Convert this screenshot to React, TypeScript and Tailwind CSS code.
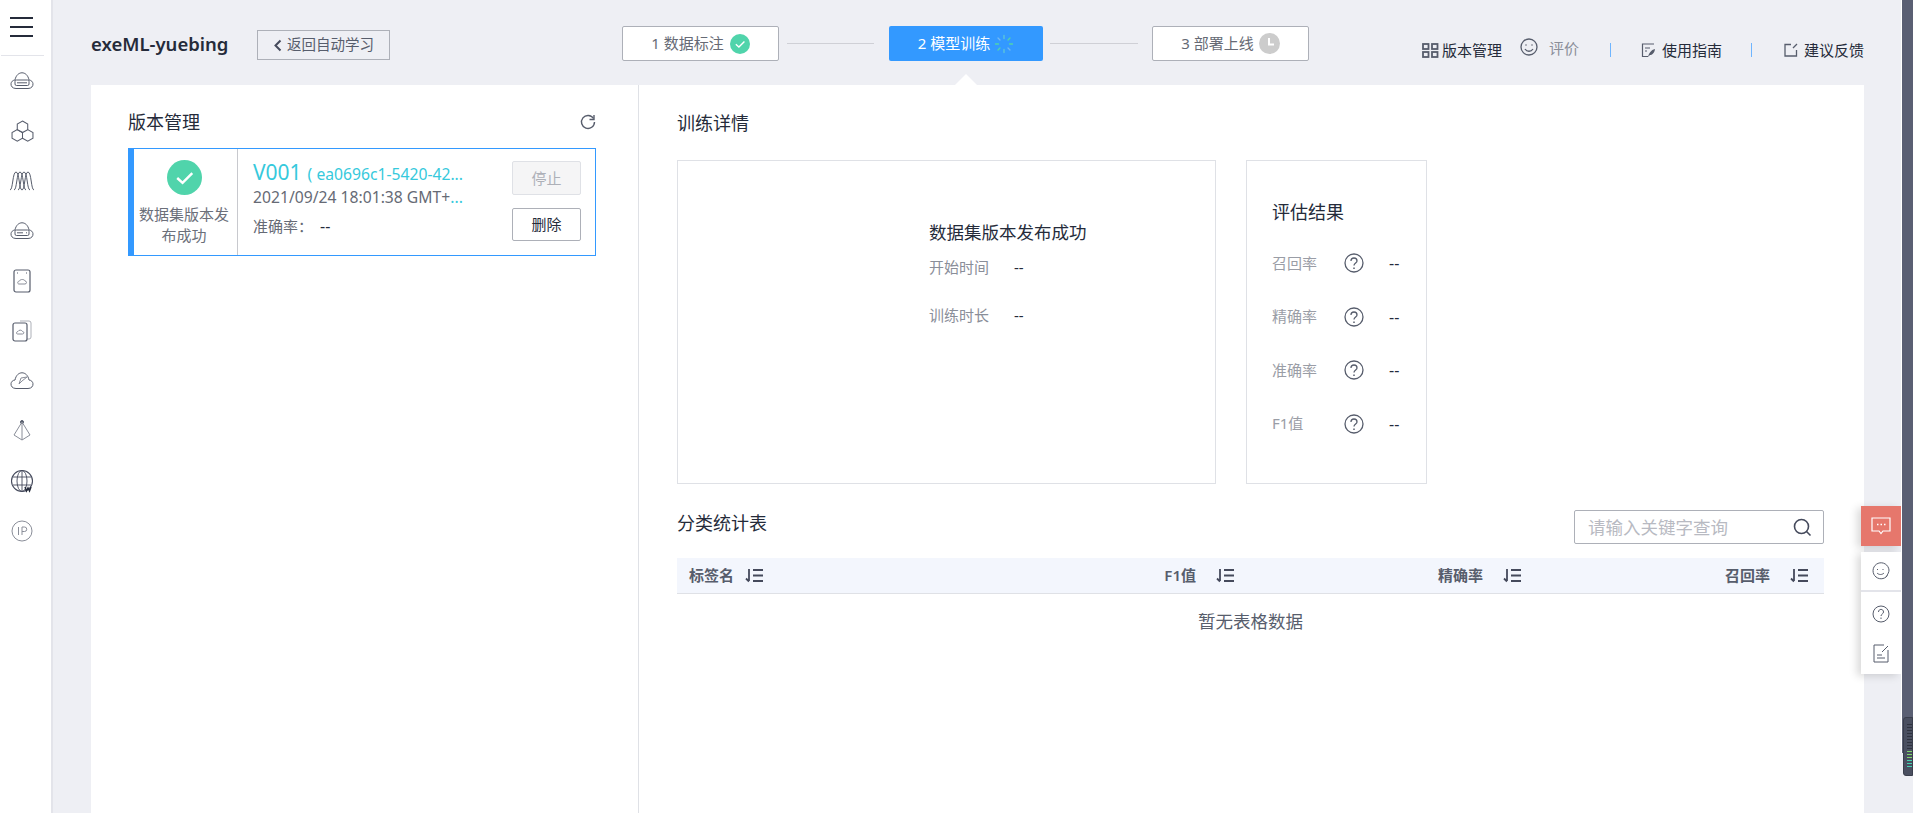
import React from "react";

const line = { fill: "none", stroke: "#575d6c", strokeWidth: 1 };

const CloudServer = ({ dots }: { dots?: boolean }) => (
  <svg width="24" height="18" viewBox="0 0 24 18" {...line}>
    <path d="M6 16.500h12c6.500 0 6.500-8 1-8.500C18 3 15 .8 12 .8S6 3 5 8c-5.500.5-5.500 8.500 1 8.500z" />
    <rect x="5" y="8" width="14" height="5.500" rx="1.500" />
    {dots ? <path d="M7 10.800h6M16 10.800h1" /> : <path d="M7 10.800h10" />}
  </svg>
);

const sideIcons = [
  <CloudServer />,
  <svg width="23" height="23" viewBox="0 0 22 22" {...line}>
    <path d="M11 1l5 2.800v5.400l-5 2.800-5-2.800V3.800z" />
    <path d="M6 9.200l5 2.800v5.400l-5 2.800-5-2.800v-5.400zM16 9.200l5 2.800v5.400l-5 2.800-5-2.800" />
  </svg>,
  <svg width="24" height="20" viewBox="0 0 24 20" {...line}>
    <path d="M0 19c3 0 2.500-18 6-18s3 18 6 18" />
    <path d="M4 19c3 0 2.500-18 6-18s3 18 6 18" />
    <path d="M8 19c3 0 2.500-18 6-18s3 18 6 18" />
    <path d="M12 19c3 0 2.500-18 6-18s3 18 6 18" />
  </svg>,
  <CloudServer dots />,
  <svg width="18" height="24" viewBox="0 0 18 24" {...line}>
    <rect x="1" y="1" width="16" height="22" rx="2" strokeWidth="1.200" />
    <path d="M6 15h6c2 0 2-3 0-3-.5-2-5-2-5.500 0-2 0-2.500 3-.5 3z" stroke="#8a8e99" />
    <path d="M4 4h1M13 4h1" />
  </svg>,
  <svg width="20" height="22" viewBox="0 0 20 22" {...line}>
    <path d="M8 1h9a2 2 0 0 1 2 2v14a2 2 0 0 1-2 2h-2" stroke="#adb0b8" />
    <rect x="1" y="3" width="14" height="18" rx="2" strokeWidth="1.200" />
    <path d="M5.500 14h5c1.800 0 1.800-2.500 0-2.500-.5-1.800-4-1.800-4.500 0-1.800 0-2 2.500-.5 2.500z" stroke="#8a8e99" />
  </svg>,
  <svg width="24" height="18" viewBox="0 0 24 18" {...line}>
    <path d="M6 16.500h12c6.500 0 6.500-8 1-8.500C18 3 15 .8 12 .8S6 3 5 8c-5.500.5-5.500 8.500 1 8.500z" />
    <path d="M9 12l2-6 6-1-5 4z" stroke="#8a8e99" />
  </svg>,
  <svg width="20" height="24" viewBox="0 0 20 24" {...line}>
    <circle cx="10" cy="3" r="1.500" fill="#575d6c" />
    <path d="M10 3v18M10 3L2 16M10 3l8 13M2 16l8 5 8-5" stroke="#8a8e99" />
  </svg>,
  <svg width="24" height="24" viewBox="0 0 24 24" fill="none" stroke="#454a5c" strokeWidth="0.900">
    <circle cx="12" cy="12" r="10.500" strokeWidth="1.100" />
    <ellipse cx="12" cy="12" rx="5" ry="10.500" />
    <path d="M12 1.500v21M3 8h18M3 16h18" />
    <path d="M15 18l1.500 4 1.500-3 1.500 3 1.500-4" strokeWidth="1.500" stroke="#252b3a" />
  </svg>,
  <svg width="22" height="22" viewBox="0 0 22 22" fill="none" stroke="#8a8e99" strokeWidth="1">
    <circle cx="11" cy="11" r="10" />
    <path d="M7.500 7v8M11 15V7h2.500a2.200 2.200 0 0 1 0 4.500H11" />
  </svg>,
];

const Sidebar = () => (
  <aside className="w-[53px] shrink-0 bg-white border-r-2 border-[#e3e4ea]">
    <div className="h-[56px] mx-px border-b border-[#e3e4ea] pl-[9px] pt-[17px] w-[43px]">
      <div className="flex flex-col gap-[7px] w-[23px]">
        <div className="h-[2px] bg-[#252b3a]" />
        <div className="h-[2px] bg-[#252b3a]" />
        <div className="h-[2px] bg-[#252b3a]" />
      </div>
    </div>
    <div className="w-[44px]">
      {sideIcons.map((icon, i) => (
        <div key={i} className="h-[50px] flex items-center justify-center">
          {icon}
        </div>
      ))}
    </div>
  </aside>
);

const GreenCheck = ({ size }: { size: number }) => (
  <svg width={size} height={size} viewBox="0 0 36 36">
    <circle cx="18" cy="18" r="18" fill="#50d4ab" />
    <path d="M10.500 18.500l5.500 5 10-10" fill="none" stroke="#fff" strokeWidth="2.500" />
  </svg>
);

const Spinner = () => (
  <svg width="20" height="20" viewBox="0 0 20 20" fill="none" strokeWidth="1.300" strokeLinecap="round">
    <path d="M10 1.500v3M10 15.500v3" stroke="#5fc8d8" />
    <path d="M1.500 10h3M15.500 10h3" stroke="#50d4ab" />
    <path d="M4 4l2 2M14 14l2 2" stroke="#6fb9f5" />
    <path d="M16 4l-2 2M6 14l-2 2" stroke="#50d4ab" />
  </svg>
);

const Clock = () => (
  <svg width="21" height="21" viewBox="0 0 21 21">
    <circle cx="10.500" cy="10.500" r="10.500" fill="#cccccc" />
    <path d="M10 5v6.500h5" fill="none" stroke="#fff" strokeWidth="2" />
  </svg>
);

const Steps = () => (
  <div className="flex items-center ml-[232px] text-[15px]">
    <div className="w-[157px] h-[35px] flex items-center justify-center gap-[6px] bg-white border border-[#adb0b8] rounded-[2px] text-[#666a75]">
      1 数据标注 <GreenCheck size={20} />
    </div>
    <div className="w-[87px] h-px bg-[#cfd0d6] ml-[8px]" />
    <div className="relative w-[154px] h-[35px] ml-[15px] flex items-center justify-center gap-[4px] bg-[#3399ff] rounded-[2px] text-white">
      2 模型训练 <Spinner />
      <div className="absolute left-1/2 -translate-x-1/2 top-[48px] w-0 h-0 border-l-[11px] border-r-[11px] border-b-[11px] border-l-transparent border-r-transparent border-b-white" />
    </div>
    <div className="w-[88px] h-px bg-[#cfd0d6] ml-[7px]" />
    <div className="w-[157px] h-[35px] ml-[14px] flex items-center justify-center gap-[5px] bg-white border border-[#adb0b8] rounded-[2px] text-[#666a75]">
      3 部署上线 <Clock />
    </div>
  </div>
);

const TopLinks = () => (
  <div className="flex items-center ml-[113px] text-[15px] text-[#252b3a]">
    <svg width="17" height="15" viewBox="0 0 17 15" fill="none" stroke="#575d6c" strokeWidth="1.800">
      <rect x="1" y="1" width="5.500" height="5" />
      <rect x="10" y="1" width="5.500" height="5" />
      <rect x="1" y="9" width="5.500" height="5" />
      <rect x="10" y="9" width="5.500" height="5" />
    </svg>
    <span className="ml-[3px] w-[60px]">版本管理</span>
    <svg className="ml-[18px] -mt-[6px]" width="18" height="18" viewBox="0 0 18 18" fill="none" stroke="#575d6c" strokeWidth="1.300">
      <circle cx="9" cy="9" r="8" />
      <path d="M5 11c2 3 6 3 8 0" />
      <path d="M6 6.500v1M12 6.500v1" strokeWidth="1.600" />
    </svg>
    <span className="ml-[11px] -mt-[4px] text-[#8a8e99] w-[30px]">评价</span>
    <div className="ml-[31px] w-px h-[14px] bg-[#6eb5ff]" />
    <svg className="ml-[30px]" width="15" height="15" viewBox="0 0 15 15" fill="none" stroke="#575d6c" strokeWidth="1.200">
      <path d="M13 1H1.500v12.500H7M4 5h5M4 8h2" />
      <path d="M7 14c1-4 3-7 7-8-.5 4-3 6-5 6z" fill="#575d6c" stroke="none" />
    </svg>
    <span className="ml-[6px] w-[60px]">使用指南</span>
    <div className="ml-[29px] w-px h-[14px] bg-[#6eb5ff]" />
    <svg className="ml-[32px]" width="14" height="14" viewBox="0 0 14 14" fill="none" stroke="#575d6c" strokeWidth="1.300">
      <path d="M7 1.500H1v11.500h11.500V7M9 5l4-4" />
    </svg>
    <span className="ml-[6px] w-[60px]">建议反馈</span>
  </div>
);

const VersionCard = () => (
  <div className="mt-[14px] h-[108px] w-[468px] flex border border-[#3399ff] border-l-[6px] bg-white">
    <div className="w-[104px] shrink-0 border-r border-[#c8c9ce] flex flex-col items-center pt-[11px] pr-[3px] text-[15px] leading-[21px] text-[#6b6f7a] text-center">
      <GreenCheck size={35} />
      <div className="mt-[9px] w-[92px]">数据集版本发布成功</div>
    </div>
    <div className="w-[210px] ml-[15px] pt-[8px]">
      <div className="flex items-baseline text-[#36c9dc] h-[30px]">
        <span className="text-[21px] w-[56px]">V001</span>
        <span className="text-[15.700px] whitespace-nowrap">( ea0696c1-5420-42...</span>
      </div>
      <div className="text-[15.700px] text-[#666a75] leading-[22px] whitespace-nowrap mt-[-1px]">
        2021/09/24 18:01:38 GMT+<span className="text-[#36c9dc]">...</span>
      </div>
      <div className="flex text-[15px] text-[#666a75] mt-[8px] leading-[20px]">
        <span className="w-[67px]">准确率：</span>
        <span className="text-[#252b3a] text-[16px]">--</span>
      </div>
    </div>
    <div className="ml-[49px] pt-[12px] flex flex-col gap-[13px]">
      <button className="w-[69px] h-[34px] bg-[#f5f5f6] border border-[#dfe1e6] rounded-[2px] text-[15px] text-[#adb0b8]">停止</button>
      <button className="w-[69px] h-[33px] bg-white border border-[#adb0b8] rounded-[2px] text-[15px] text-[#252b3a]">删除</button>
    </div>
  </div>
);

const Question = () => (
  <svg width="20" height="20" viewBox="0 0 20 20" fill="none" stroke="#575d6c" strokeWidth="1.300">
    <circle cx="10" cy="10" r="9" />
    <path d="M7 8c0-4 6-4 6 0 0 2-3 2-3 4.500" />
    <path d="M10 14.500v1.500" strokeWidth="1.500" />
  </svg>
);

const metrics = ["召回率", "精确率", "准确率", "F1值"];

const SortIcon = () => (
  <svg width="19" height="15" viewBox="0 0 19 15" fill="none" stroke="#454a5c" strokeWidth="1.800">
    <path d="M4 1v12M1 10.500L4 13.500M8 2h10M8 7.500h10M8 13h10" />
  </svg>
);

const columns = [
  { name: "标签名", right: false },
  { name: "F1值", right: true },
  { name: "精确率", right: true },
  { name: "召回率", right: true },
];

const Detail = () => (
  <div className="flex-1 pl-[38px] pr-[40px]">
    <div className="pt-[26px] text-[18px] leading-[24px] text-[#252b3a]">训练详情</div>
    <div className="flex gap-[30px] mt-[25px]">
      <div className="w-[539px] h-[324px] border border-[#dfe1e6] pl-[251px] pt-[59px]">
        <div className="text-[17.500px] leading-[24px] text-[#252b3a]">数据集版本发布成功</div>
        <div className="mt-[11px] flex text-[15px] leading-[24px]">
          <span className="w-[85px] text-[#8a8e99]">开始时间</span>
          <span className="text-[#252b3a]">--</span>
        </div>
        <div className="mt-[24px] flex text-[15px] leading-[24px]">
          <span className="w-[85px] text-[#8a8e99]">训练时长</span>
          <span className="text-[#252b3a]">--</span>
        </div>
      </div>
      <div className="w-[181px] h-[324px] border border-[#dfe1e6] pl-[25px] pt-[39px]">
        <div className="text-[18px] leading-[24px] text-[#252b3a]">评估结果</div>
        <div className="mt-[29px] flex flex-col gap-[33.500px]">
          {metrics.map((m) => (
            <div key={m} className="flex items-center h-[20px] text-[15px]">
              <span className="w-[72px] text-[#9a9da6]">{m}</span>
              <Question />
              <span className="ml-[25px] text-[#252b3a] text-[16px]">--</span>
            </div>
          ))}
        </div>
      </div>
    </div>
    <div className="flex justify-between mt-[26px] h-[34px]">
      <div className="text-[18px] leading-[24px] text-[#252b3a] mt-[1px]">分类统计表</div>
      <div className="w-[250px] h-[34px] border border-[#adb0b8] rounded-[2px] flex items-center justify-between pl-[13px] pr-[11px]">
        <span className="text-[17.500px] text-[#b8bac2]">请输入关键字查询</span>
        <svg width="19" height="19" viewBox="0 0 19 19" fill="none" stroke="#454a5c" strokeWidth="1.600">
          <circle cx="8.500" cy="8.500" r="7" />
          <path d="M13.500 13.500l4 4" />
        </svg>
      </div>
    </div>
    <div className="mt-[14px] grid grid-cols-4 h-[36px] w-[1147px] gap-px bg-[#f3f6fd] border-b border-[#dfe1e6]">
      {columns.map((c) => (
        <div
          key={c.name}
          className={`flex items-center font-semibold text-[15px] text-[#575d6c] ${c.right ? "justify-end pr-[15px]" : "pl-[12px]"}`}
        >
          {c.name}
          <span className={c.right ? "ml-[20px]" : "ml-[11px]"}>
            <SortIcon />
          </span>
        </div>
      ))}
    </div>
    <div className="w-[1147px] text-center text-[17.500px] leading-[24px] mt-[15px] text-[#575d6c]">暂无表格数据</div>
  </div>
);

const FloatBar = () => (
  <div className="absolute left-[1861px] top-[506px] w-[40px]">
    <div className="h-[40px] bg-[#e6776c] flex items-center justify-center shadow-[-4px_2px_8px_rgba(0,0,0,0.15)]">
      <svg width="20" height="18" viewBox="0 0 20 18" fill="none" stroke="#fff" strokeWidth="1.200">
        <path d="M1 1h18v13h-7l-2 2.500L8 14H1z" />
        <path d="M6 7.500h1.500M9.500 7.500H11M13 7.500h1.500" strokeWidth="1.600" />
      </svg>
    </div>
    <div className="mt-[6px] h-[122px] bg-white shadow-[-4px_2px_8px_rgba(0,0,0,0.15)] flex flex-col items-center">
      <div className="h-[40px] w-full border-b-2 border-[#e3e4ea] flex items-center justify-center">
        <svg width="18" height="18" viewBox="0 0 18 18" fill="none" stroke="#575d6c" strokeWidth="1">
          <path d="M15.500 13.500A8 8 0 1 1 17 8c0 2-1 4-3 7" />
          <path d="M5 11c2 2 5 2 7 0M5.500 7v1M11 7v1" />
        </svg>
      </div>
      <div className="h-[43px] flex items-center justify-center">
        <svg width="18" height="18" viewBox="0 0 18 18" fill="none" stroke="#575d6c" strokeWidth="1">
          <circle cx="9" cy="9" r="8" />
          <path d="M6.500 7c0-3.500 5-3.500 5 0 0 2-2.500 2-2.500 4M9 12.500V14" />
        </svg>
      </div>
      <div className="h-[37px] flex items-center justify-center">
        <svg width="16" height="19" viewBox="0 0 16 19" fill="none" stroke="#575d6c" strokeWidth="1">
          <path d="M11 1H1v17h14V6M4 11h5M4 14h8M9 8l6-6" />
        </svg>
      </div>
    </div>
  </div>
);

const ScrollStrip = () => (
  <div className="absolute left-[1901px] top-0 w-[12px] h-[813px] bg-[#eeeff4]">
    <div className="border-l border-white h-[753px] bg-[#5a5f73] w-full" />
    <div className="absolute left-[2px] top-[717px] w-[10px] h-[59px] bg-[#4a4f60] border border-[#3a3e4c] rounded-l-[3px] pt-[6px] pl-[3px] flex flex-col gap-[2px]">
      {[0, 1, 2, 3, 4, 5, 6, 7, 8, 9, 10, 11, 12, 13, 14].map((i) => (
        <div key={i} className={`h-px w-[5px] shrink-0 ${i < 9 ? "bg-[#2f333f]" : i < 12 ? "bg-[#7fd36a]" : "bg-[#45d0b0]"}`} />
      ))}
    </div>
  </div>
);

export default function App() {
  return (
    <div
      className="relative flex w-[1913px] h-[813px] overflow-hidden bg-[#eeeff4]"
      style={{ fontFamily: '"Noto Sans", "Noto Sans CJK SC", sans-serif' }}
    >
      <Sidebar />
      <main className="flex-1 pl-[38px]">
        <header className="h-[85px] flex items-start">
          <div className="w-[166px] mt-[26px] h-[35px] flex items-center text-[18.500px] font-semibold text-[#252b3a]">exeML-yuebing</div>
          <button className="mt-[30px] w-[133px] h-[30px] flex items-center justify-center gap-[5px] border border-[#adb0b8] text-[14.500px] text-[#575d6c]">
            <svg width="9" height="13" viewBox="0 0 9 13" fill="none" stroke="#454a5c" strokeWidth="2">
              <path d="M7.500 1.500L2.500 6.500l5 5" />
            </svg>
            返回自动学习
          </button>
          <div className="mt-[26px]">
            <Steps />
          </div>
          <div className="mt-[39px]">
            <TopLinks />
          </div>
        </header>
        <div className="flex w-[1773px] h-[728px] bg-white">
          <div className="w-[548px] shrink-0 border-r border-[#dfe1e6] pl-[37px]">
            <div className="w-[468px] pt-[25px] flex items-center justify-between">
              <span className="text-[18px] leading-[24px] text-[#252b3a]">版本管理</span>
              <svg width="16" height="16" viewBox="0 0 16 16" fill="none" stroke="#575d6c" strokeWidth="1.400">
                <path d="M13.500 4.500A6.500 6.500 0 1 0 14.500 8" />
                <path d="M14 1v4.500H9.500" strokeWidth="1.400" />
              </svg>
            </div>
            <VersionCard />
          </div>
          <Detail />
        </div>
      </main>
      <FloatBar />
      <ScrollStrip />
    </div>
  );
}
